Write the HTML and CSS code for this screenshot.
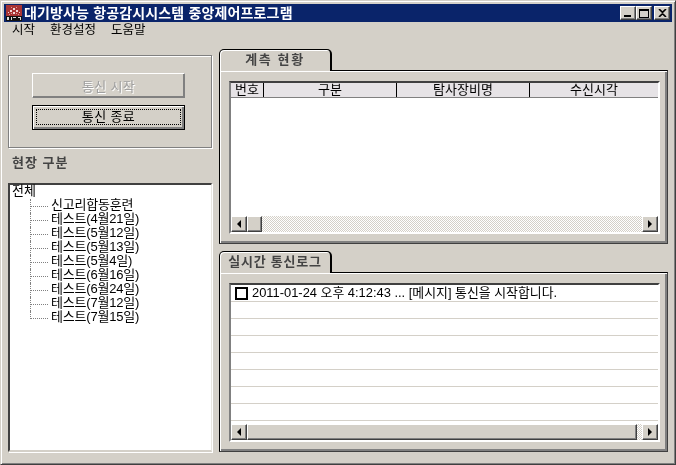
FILE: index.html

```html
<!DOCTYPE html>
<html lang="ko">
<head>
  <meta charset="UTF-8" />
  <title>대기방사능 항공감시시스템 중앙제어프로그램</title>
  <link rel="stylesheet" href="styles.css">
</head>
<body>
  <div class="window">
    <div class="titlebar">
      <svg class="app-icon" width="16" height="16" viewBox="0 0 16 16">
        <rect width="16" height="16" fill="#a83434"/>
        <path d="M4 5h2v2h-2zM7 3h2v2h-2zM10 5h2v2h-2zM7 7h2v2h-2zM2 7h1v1h-1zM13 7h1v1h-1z" fill="#f0d8d8"/>
        <path d="M5 2h1v1h-1zM10 2h1v1h-1zM3 9h1v1h-1zM12 9h1v1h-1zM5 8h1v1h-1zM10 8h1v1h-1z" fill="#e09a9a"/>
        <rect x="0" y="11" width="16" height="5" fill="#111"/>
        <path d="M1 12h2v3h-2zM5 12h1v3h-1zM7 12h3v1h-3zM12 12h3v3h-1v-2h-2z" fill="#ddd"/>
      </svg>
      <span class="title-text">대기방사능 항공감시시스템 중앙제어프로그램</span>
      <div class="caption-btns">
        <button class="cap-btn"><span class="cap-min"></span></button>
        <button class="cap-btn"><span class="cap-max"></span></button>
        <button class="cap-btn cap-close">
          <svg width="9" height="8" viewBox="0 0 9 8"><path d="M1 0l3.5 3.3L8 0M1 8l3.5-3.3L8 8" fill="none" stroke="#000" stroke-width="1.6"/></svg>
        </button>
      </div>
    </div>

    <div class="menubar">
      <span>시작</span>
      <span>환경설정</span>
      <span>도움말</span>
    </div>

    <div class="content">
      <div class="left">
        <div class="groupbox">
          <button class="btn btn-disabled">통신 시작</button>
          <button class="btn btn-default"><span>통신 종료</span></button>
        </div>
        <h3 class="side-title">현장 구분</h3>
        <div class="tree">
          <div class="tree-root">전체</div>
          <ul class="tree-list">
            <li>신고리합동훈련</li>
            <li>테스트(4월21일)</li>
            <li>테스트(5월12일)</li>
            <li>테스트(5월13일)</li>
            <li>테스트(5월4일)</li>
            <li>테스트(6월16일)</li>
            <li>테스트(6월24일)</li>
            <li>테스트(7월12일)</li>
            <li>테스트(7월15일)</li>
          </ul>
        </div>
      </div>

      <div class="right">
        <div class="tabset tabset-status">
          <div class="tab tab-status">계측 현황</div>
          <div class="panel">
            <div class="list">
              <div class="list-head">
                <div class="col col-no">번호</div>
                <div class="col col-type">구분</div>
                <div class="col col-name">탐사장비명</div>
                <div class="col col-time">수신시각</div>
              </div>
              <div class="list-body"></div>
              <div class="hscroll">
                <div class="sb-btn"><span class="arrow-left"></span></div>
                <div class="sb-thumb sb-thumb-small"></div>
                <div class="sb-track"></div>
                <div class="sb-btn"><span class="arrow-right"></span></div>
              </div>
            </div>
          </div>
        </div>

        <div class="tabset tabset-log">
          <div class="tab">실시간 통신로그</div>
          <div class="panel">
            <div class="list">
              <div class="log-body">
                <div class="log-row"><span class="check"></span>2011-01-24 오후 4:12:43 ... [메시지] 통신을 시작합니다.</div>
                <div class="log-row"></div>
                <div class="log-row"></div>
                <div class="log-row"></div>
                <div class="log-row"></div>
                <div class="log-row"></div>
                <div class="log-row"></div>
                <div class="log-row"></div>
              </div>
              <div class="hscroll">
                <div class="sb-btn"><span class="arrow-left"></span></div>
                <div class="sb-thumb sb-thumb-wide"></div>
                <div class="sb-track"></div>
                <div class="sb-btn"><span class="arrow-right"></span></div>
              </div>
            </div>
          </div>
        </div>
      </div>
    </div>
  </div>
</body>
</html>
```

FILE: styles.css

```css
* { box-sizing: border-box; }
html, body {
  margin: 0;
  height: 100%;
  background: #d4d0c8;
}
body {
  font-family: "Liberation Sans", "Noto Sans CJK KR", sans-serif;
  font-size: 13px;
  color: #000;
  overflow: hidden;
}
.window {
  width: 676px;
  height: 465px;
  padding: 3px;
  border: 1px solid;
  border-color: #d4d0c8 #404040 #404040 #d4d0c8;
  box-shadow: inset 1px 1px 0 #fff, inset -1px -1px 0 #808080;
  display: flex;
  flex-direction: column;
  will-change: transform;
}

/* title bar */
.titlebar {
  height: 18px;
  flex: none;
  background: #0a246a;
  display: flex;
  align-items: center;
  padding: 0 2px 0 2px;
}
.app-icon { flex: none; margin-right: 2px; }
.title-text {
  color: #fff;
  font-weight: 700;
  font-size: 14px;
  letter-spacing: 0.15px;
  line-height: 18px;
  white-space: nowrap;
}
.caption-btns {
  margin-left: auto;
  display: flex;
}
.cap-btn {
  width: 16px;
  height: 14px;
  padding: 0;
  border: 1px solid;
  border-color: #fff #404040 #404040 #fff;
  background: #d4d0c8;
  box-shadow: inset -1px -1px 0 #808080;
  display: flex;
  align-items: center;
  justify-content: center;
}
.cap-close { margin-left: 2px; }
.cap-min {
  width: 7px;
  height: 2px;
  background: #000;
  margin-top: 6px;
  margin-right: 2px;
}
.cap-max {
  width: 10px;
  height: 9px;
  border: 1px solid #000;
  border-top-width: 2px;
}

/* menu */
.menubar {
  height: 18px;
  flex: none;
  display: flex;
  gap: 15px;
  padding-left: 8px;
  font-size: 12.5px;
  line-height: 17px;
}

/* main area */
.content {
  flex: 1;
  display: flex;
  gap: 7px;
  padding: 0 4px 9px 4px;
  min-height: 0;
}
.left {
  width: 204px;
  flex: none;
  padding-top: 15px;
  display: flex;
  flex-direction: column;
}
.groupbox {
  height: 93px;
  flex: none;
  border: 1px solid #808080;
  box-shadow: 1px 1px 0 #fff, inset 1px 1px 0 #fff;
  padding: 17px 26px 0 23px;
  display: flex;
  flex-direction: column;
  gap: 7px;
}
.btn {
  height: 25px;
  font: inherit;
  font-size: 13px;
  letter-spacing: 0.4px;
  background: #d4d0c8;
  padding: 0;
}
.btn-disabled {
  color: #a0a0a0;
  text-shadow: 1px 1px 0 #fff;
  border: 1px solid;
  border-color: #fff #808080 #808080 #fff;
  box-shadow: inset 0 -1px 0 #808080, inset -1px 0 0 #808080;
}
.btn-default {
  border: 1px solid #000;
  box-shadow: inset 1px 1px 0 #fff, inset -2px -2px 0 #808080;
  padding: 3px 3px 4px 3px;
}
.btn-default span {
  display: block;
  height: 100%;
  line-height: 14px;
  border: 1px dotted #000;
}
.side-title {
  margin: 0;
  height: 35px;
  flex: none;
  font-size: 13px;
  font-weight: 700;
  letter-spacing: 1px;
  color: #444;
  line-height: 30px;
  padding-left: 4px;
}
.tree {
  flex: 1;
  background: #fff;
  border: solid #404040;
  border-width: 2px 1px 2px 2px;
  border-right-color: #e8e6e0;
  border-bottom-color: #d4d0c8;
  padding-left: 2px;
  line-height: 11px;
  box-shadow: 1px 1px 0 #fff;
}
.tree-root { height: 14px; }
.tree-list {
  list-style: none;
  margin: 0;
  padding: 0 0 0 18px;
  letter-spacing: -0.2px;
}
.tree-list li {
  height: 14px;
  padding-left: 21px;
  white-space: nowrap;
  position: relative;
}
.tree-list li::before {
  content: "";
  position: absolute;
  left: 0;
  top: 0;
  bottom: 0;
  border-left: 1px dotted #808080;
}
.tree-list li:last-child::before { bottom: 6px; }
.tree-list li::after {
  content: "";
  position: absolute;
  left: 1px;
  top: 7px;
  width: 17px;
  border-top: 1px dotted #808080;
}

/* tabs */
.right {
  flex: 1;
  min-width: 0;
  padding-top: 9px;
  display: flex;
  flex-direction: column;
  gap: 7px;
}
.tabset { display: flex; flex-direction: column; }
.tabset-status { height: 195px; flex: none; }
.tabset-log { flex: 1; min-height: 0; }
.tab {
  width: 113px;
  height: 22px;
  flex: none;
  margin-bottom: -1px;
  background: #d4d0c8;
  border: 1px solid #000;
  border-bottom: none;
  border-radius: 5px 5px 0 0;
  border-right-width: 2px;
  box-shadow: inset 1px 1px 0 #fff;
  font-size: 13px;
  font-weight: 700;
  letter-spacing: 0.8px;
  color: #444;
  text-align: center;
  line-height: 20px;
  position: relative;
  z-index: 1;
}
.tab-status { letter-spacing: 1.6px; }
.panel {
  flex: 1;
  min-height: 0;
  border: 1px solid #000;
  border-right-color: #404040;
  border-bottom-color: #404040;
  box-shadow: inset 1px 1px 0 #fff, inset -2px -2px 0 #808080;
  padding: 10px 7px 9px 9px;
  display: flex;
}
.list {
  flex: 1;
  min-width: 0;
  display: flex;
  flex-direction: column;
  background: #fff;
  border: 2px solid;
  border-color: #404040 #fff #fff #808080;
}
.list-head {
  height: 15px;
  flex: none;
  display: flex;
  background: #e6e3e6;
  border-bottom: 1px solid #808080;
  font-size: 13px;
  line-height: 13px;
  text-align: center;
}
.col { border-right: 1px solid #000; flex: none; }
.col-no { width: 33px; }
.col-type { width: 133px; }
.col-name { width: 133px; }
.col-time { flex: 1; border-right: none; }
.list-body { flex: 1; }

/* log */
.log-body { flex: 1; overflow: hidden; }
.log-row {
  height: 17px;
  border-bottom: 1px solid #d4d0c8;
  display: flex;
  align-items: center;
  font-size: 12.9px;
  line-height: 16px;
  padding-left: 4px;
  white-space: nowrap;
}
.check {
  width: 13px;
  height: 13px;
  border: 2px solid #000;
  background: #fff;
  margin-right: 4px;
  flex: none;
}

/* scrollbar */
.hscroll {
  height: 16px;
  flex: none;
  display: flex;
  background: repeating-conic-gradient(#d4d0c8 0 25%, #fff 0 50%) 0 0 / 2px 2px;
}
.sb-btn, .sb-thumb {
  background: #d4d0c8;
  border: 1px solid;
  border-color: #fff #404040 #404040 #fff;
  box-shadow: inset -1px -1px 0 #808080;
  flex: none;
}
.sb-btn {
  width: 16px;
  display: flex;
  align-items: center;
  justify-content: center;
}
.sb-thumb-small { width: 15px; }
.sb-thumb-wide { width: 390px; }
.sb-track { flex: 1; }
.arrow-left, .arrow-right {
  width: 0;
  height: 0;
  border-top: 4px solid transparent;
  border-bottom: 4px solid transparent;
}
.arrow-left { border-right: 4px solid #000; }
.arrow-right { border-left: 4px solid #000; }
```
